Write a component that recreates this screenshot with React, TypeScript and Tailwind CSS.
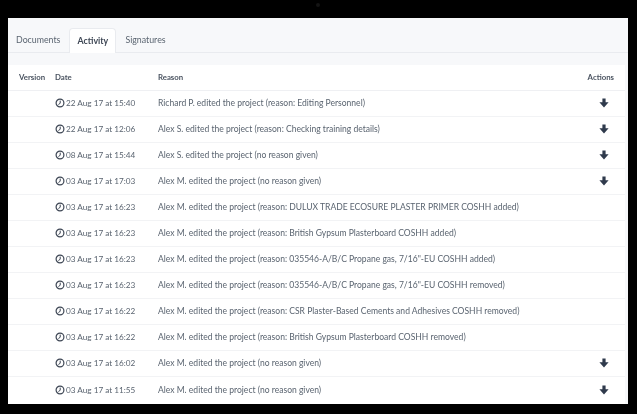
const rows = [
  { date: '22 Aug 17 at 15:40', reason: 'Richard P. edited the project (reason: Editing Personnel)', dl: true },
  { date: '22 Aug 17 at 12:06', reason: 'Alex S. edited the project (reason: Checking training details)', dl: true },
  { date: '08 Aug 17 at 15:44', reason: 'Alex S. edited the project (no reason given)', dl: true },
  { date: '03 Aug 17 at 17:03', reason: 'Alex M. edited the project (no reason given)', dl: true },
  { date: '03 Aug 17 at 16:23', reason: 'Alex M. edited the project (reason: DULUX TRADE ECOSURE PLASTER PRIMER COSHH added)', dl: false },
  { date: '03 Aug 17 at 16:23', reason: 'Alex M. edited the project (reason: British Gypsum Plasterboard COSHH added)', dl: false },
  { date: '03 Aug 17 at 16:23', reason: 'Alex M. edited the project (reason: 035546-A/B/C Propane gas, 7/16"-EU COSHH added)', dl: false },
  { date: '03 Aug 17 at 16:23', reason: 'Alex M. edited the project (reason: 035546-A/B/C Propane gas, 7/16"-EU COSHH removed)', dl: false },
  { date: '03 Aug 17 at 16:22', reason: 'Alex M. edited the project (reason: CSR Plaster-Based Cements and Adhesives COSHH removed)', dl: false },
  { date: '03 Aug 17 at 16:22', reason: 'Alex M. edited the project (reason: British Gypsum Plasterboard COSHH removed)', dl: false },
  { date: '03 Aug 17 at 16:02', reason: 'Alex M. edited the project (no reason given)', dl: true },
  { date: '03 Aug 17 at 11:55', reason: 'Alex M. edited the project (no reason given)', dl: true },
]

function ClockIcon() {
  return (
    <svg width="10" height="10" viewBox="0 0 10 10" fill="none" stroke="#3d4654" className="shrink-0">
      <circle cx="5" cy="5" r="3.9" strokeWidth="1.2" />
      <path d="M5.2 2.6V5.3L3.4 6.5" strokeWidth="1" />
    </svg>
  )
}

function ArrowIcon() {
  return (
    <svg width="10" height="10" viewBox="0 0 10 10" fill="#2f3a4c" className="mb-px">
      <path d="M3.4 0.5H6.6V4.2H9.6L5 9.4L0.4 4.2H3.4Z" />
    </svg>
  )
}

export default function App() {
  return (
    <div className="relative h-[414px] w-[637px] overflow-hidden bg-black pt-[18px] pl-2 font-['Lato','Liberation_Sans',sans-serif] text-[#5a6470]">
      <div className="absolute top-[3px] left-[316px] size-[4px] rounded-full bg-[#141414]" />
      <div className="flex h-[386px] w-[620px] flex-col bg-[#f7f8fa] blur-[0.3px]">
        <div className="flex h-[35px] items-end gap-[9px] border-b border-[#e9ebef] pl-2 text-[8.8px]">
          <div className="flex h-[24px] items-center">Documents</div>
          <div className="-mb-px flex h-[25px] w-[47px] items-center justify-center rounded-t-sm border border-b-0 border-[#e9ebef] bg-white font-bold text-[#3d4654]">Activity</div>
          <div className="flex h-[24px] items-center">Signatures</div>
        </div>
        <div className="mt-3 mr-[3px] h-[339px] bg-white text-[8.55px]">
          <div className="flex h-[26px] items-center border-b border-[#eff0f3] text-[7.8px] font-bold text-[#4a5360]">
            <div className="w-[47px] pl-[11px]">Version</div>
            <div className="w-[103px]">Date</div>
            <div className="flex-1">Reason</div>
            <div className="pr-[11px]">Actions</div>
          </div>
          {rows.map((r, i) => (
            <div key={i} className="flex h-[26px] items-center border-b border-[#f2f3f5] last:border-b-0">
              <div className="w-[47px]" />
              <div className="flex w-[103px] items-center gap-[1px] text-[8.2px]">
                <ClockIcon />
                <span>{r.date}</span>
              </div>
              <div className="flex-1">{r.reason}</div>
              <div className="flex w-[26px] justify-start">{r.dl && <ArrowIcon />}</div>
            </div>
          ))}
        </div>
      </div>
    </div>
  )
}
